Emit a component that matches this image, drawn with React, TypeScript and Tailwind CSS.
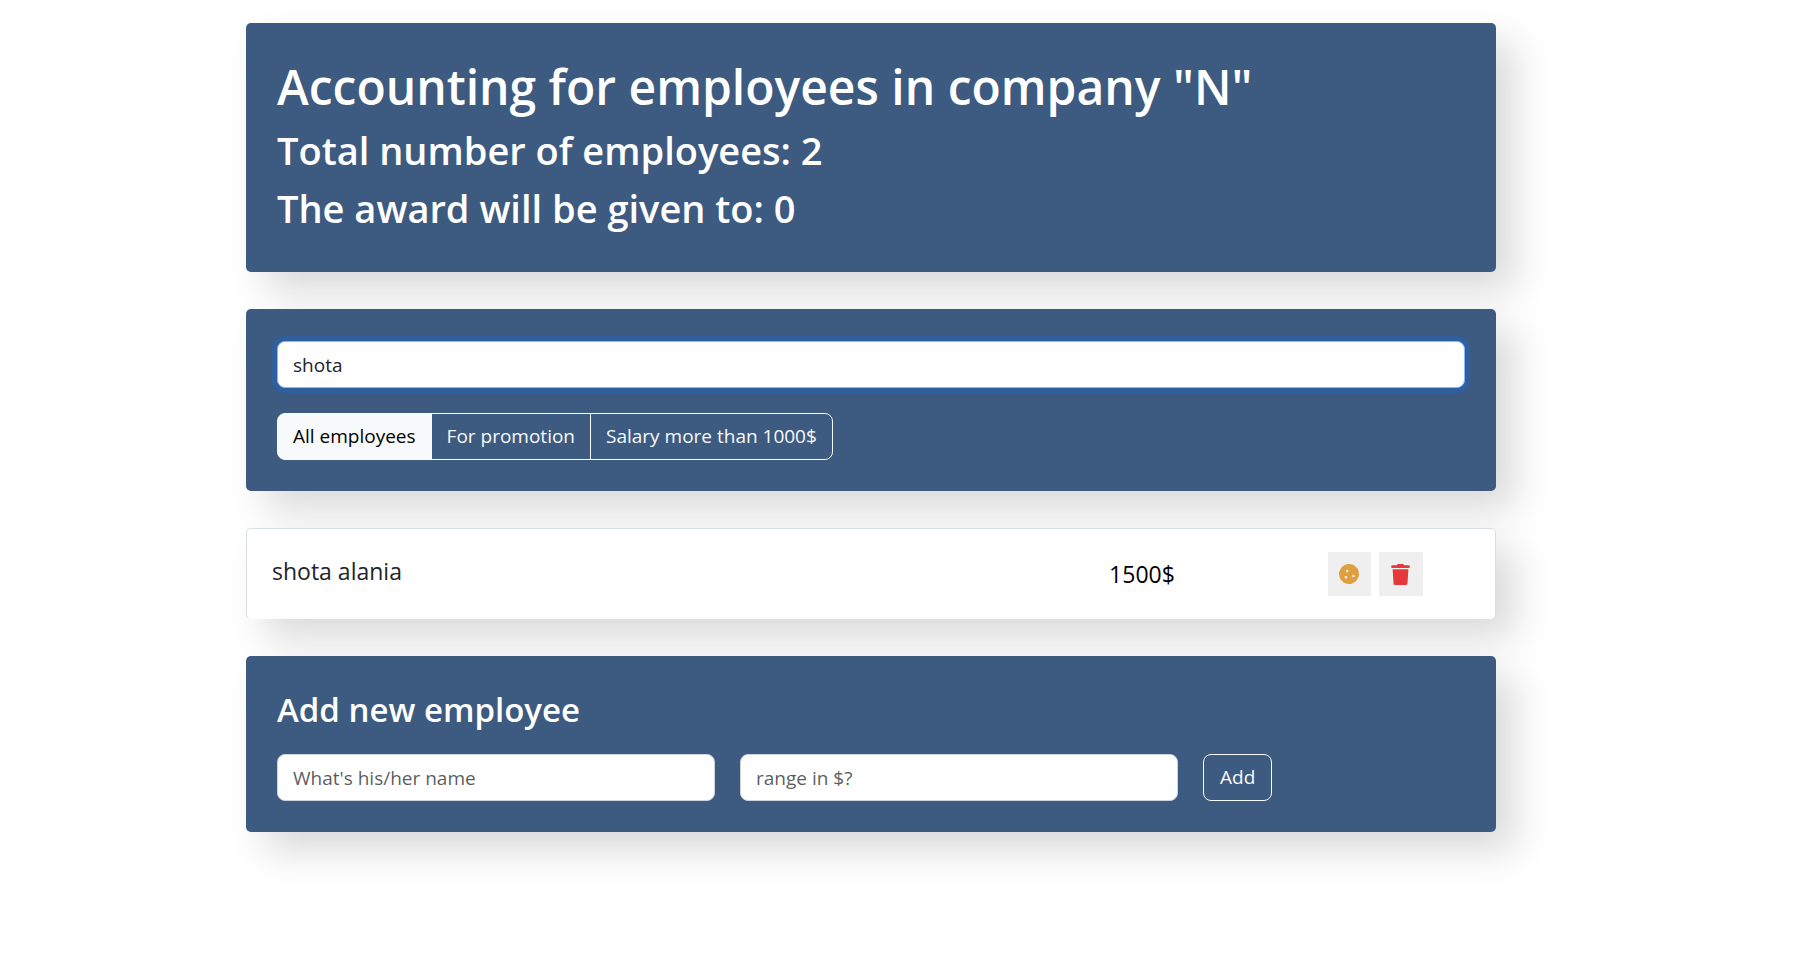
import { useState } from "react";
import { FaCookie, FaTrash } from "react-icons/fa";

const panel =
  "rounded-[5px] bg-[#3d5a80] px-[31px] text-white shadow-[19px_19px_38px_rgba(0,0,0,0.15)]";
const field =
  "h-[47px] w-[438px] min-w-0 rounded-[8px] border border-[#ced4da] bg-white px-[15px] text-[19px] text-[#212529] outline-none placeholder:text-[#212529]/75";
const filterButton =
  "-ml-px h-[47px] border border-[#f8f9fa] px-[15px] text-[19px] first:ml-0 first:rounded-l-[8px] last:rounded-r-[8px]";

const filters = ["All employees", "For promotion", "Salary more than 1000$"];

function Header() {
  return (
    <header className={`${panel} pt-[34px] pb-[40px]`}>
      <h1 className="mb-[9px] text-[48px] leading-[60px] font-semibold">
        Accounting for employees in company "N"
      </h1>
      <h2 className="mb-[10px] text-[38px] leading-[48px] font-semibold">
        Total number of employees: 2
      </h2>
      <h2 className="text-[38px] leading-[48px] font-semibold">
        The award will be given to: 0
      </h2>
    </header>
  );
}

function SearchPanel() {
  const [term, setTerm] = useState("shota");
  const [active, setActive] = useState(filters[0]);
  return (
    <section className={`${panel} pt-[32px] pb-[31px]`}>
      <input
        type="text"
        aria-label="Find employee"
        value={term}
        onChange={(e) => setTerm(e.target.value)}
        className="block h-[47px] w-full rounded-[8px] border border-[#86b7fe] bg-white px-[15px] text-[19px] text-[#212529] shadow-[0_0_0_5px_rgba(13,110,253,0.25)] outline-none"
      />
      <div className="mt-[25px] flex">
        {filters.map((name) => (
          <button
            key={name}
            type="button"
            onClick={() => setActive(name)}
            className={`${filterButton} ${
              active === name ? "bg-[#f8f9fa] text-black" : "text-[#f8f9fa]"
            }`}
          >
            {name}
          </button>
        ))}
      </div>
    </section>
  );
}

function EmployeesList() {
  const [salary, setSalary] = useState("1500$");
  return (
    <ul className="rounded-[5px] bg-white shadow-[19px_19px_38px_rgba(0,0,0,0.15)]">
      <li className="flex items-start justify-between rounded-[5px] border border-b-0 border-[#3d5a80]/20 pt-[23px] pr-[72px] pb-[23px] pl-[25px]">
        <span className="text-[23px] leading-[38px] text-[#212529]">shota alania</span>
        <div className="flex items-center">
          <input
            type="text"
            aria-label="Salary of shota alania"
            value={salary}
            onChange={(e) => setSalary(e.target.value)}
            className="mr-[98px] h-[44px] w-[176px] bg-transparent text-center text-[23px] text-black outline-none"
          />
          <div className="flex gap-2">
            <button
              type="button"
              aria-label="Give award"
              className="flex h-[44px] w-[43px] items-center justify-center bg-[#efefef] pr-px text-[20px] text-[#e09f3e]"
            >
              <FaCookie />
            </button>
            <button
              type="button"
              aria-label="Delete employee"
              className="flex size-[44px] items-center justify-center bg-[#efefef] pr-px text-[21px] text-[#e5383b]"
            >
              <FaTrash />
            </button>
          </div>
        </div>
      </li>
    </ul>
  );
}

function AddForm() {
  return (
    <section className={`${panel} pt-[33px] pb-[31px]`}>
      <h3 className="text-[33px] leading-[42px] font-semibold">Add new employee</h3>
      <form className="mt-[23px] flex gap-[25px]" onSubmit={(e) => e.preventDefault()}>
        <input
          type="text"
          aria-label="Name"
          placeholder="What's his/her name"
          className={field}
        />
        <input
          type="text"
          aria-label="Salary"
          placeholder="range in $?"
          className={field}
        />
        <button
          type="submit"
          className="h-[47px] rounded-[8px] border border-[#f8f9fa] px-4 text-[19px] text-[#f8f9fa]"
        >
          Add
        </button>
      </form>
    </section>
  );
}

export default function App() {
  return (
    <div className="bg-white pt-[23px] pr-[58px] pb-[80px] font-['Open_Sans','Noto_Sans',sans-serif]">
      <main className="mx-auto flex max-w-[1250px] flex-col gap-[37px]">
        <Header />
        <SearchPanel />
        <EmployeesList />
        <AddForm />
      </main>
    </div>
  );
}
